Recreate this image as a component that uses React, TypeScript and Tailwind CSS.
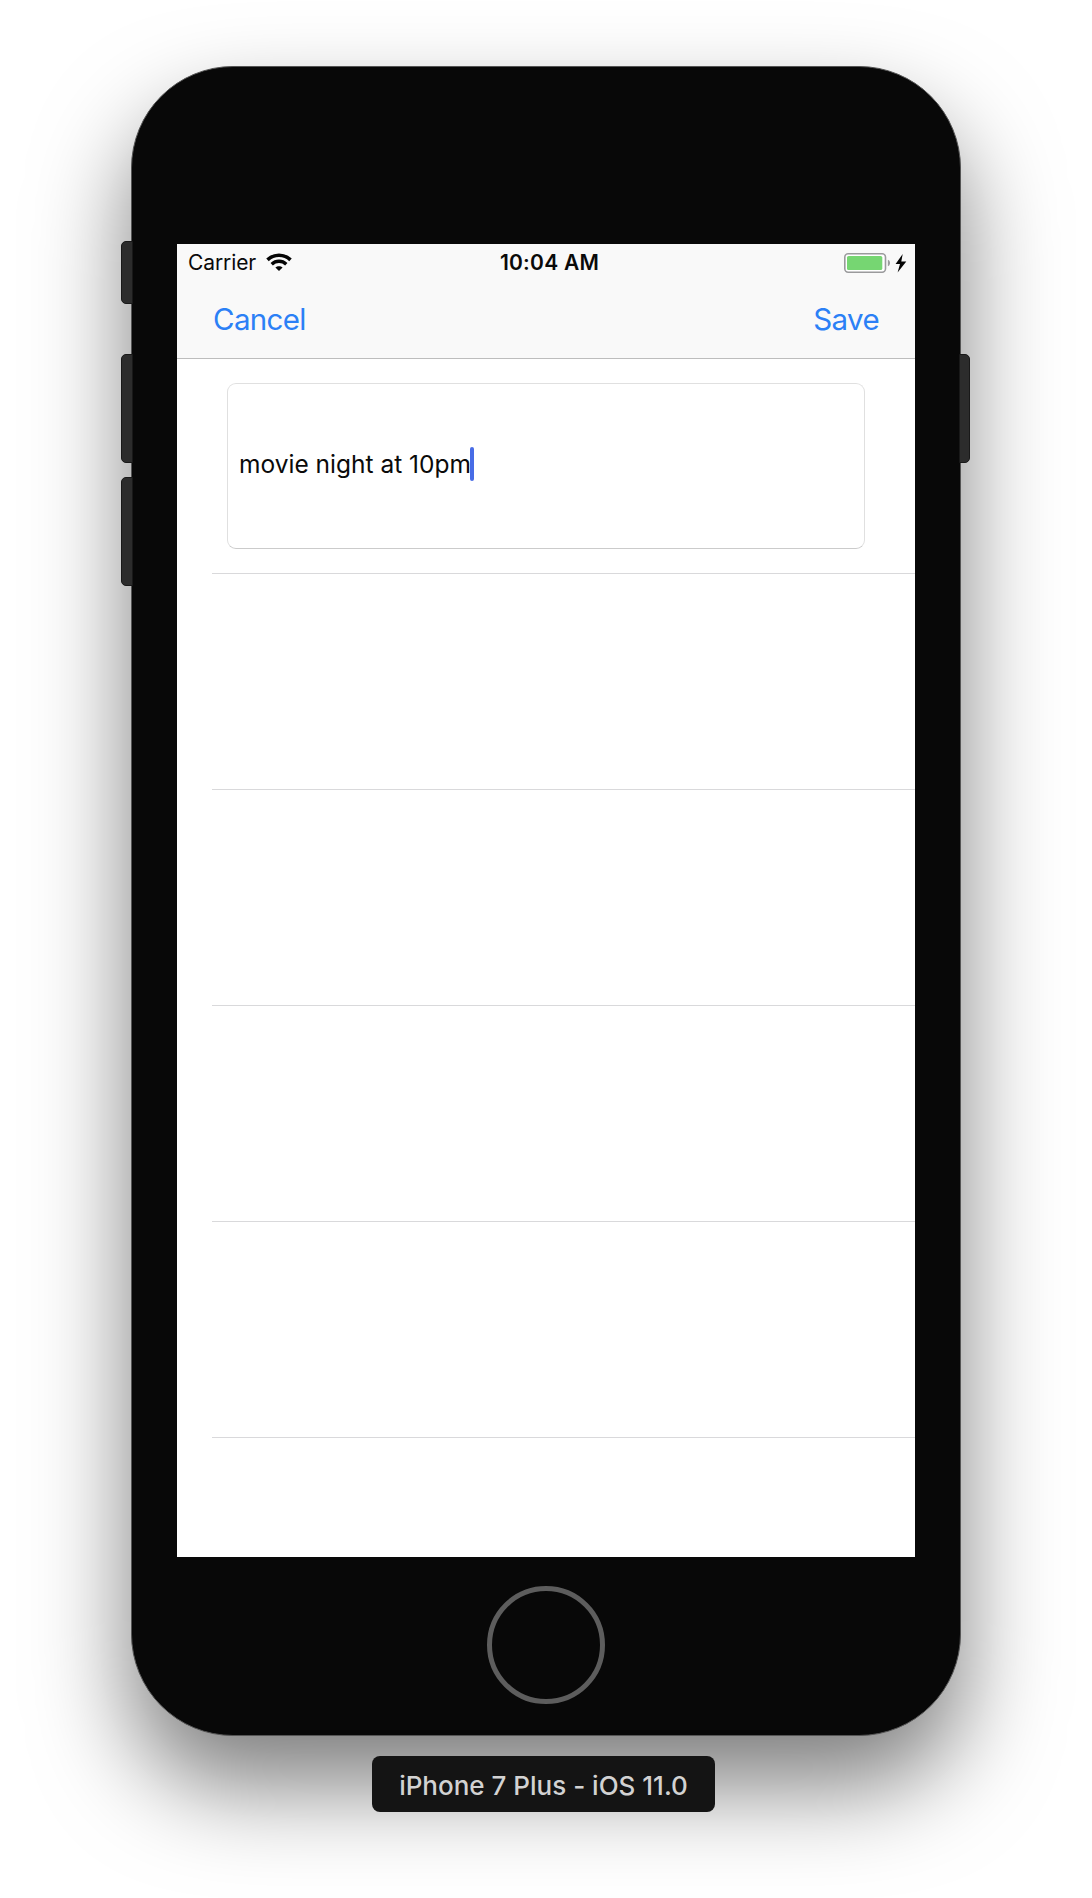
function WifiIcon() {
  return (
    <svg width="26" height="19" viewBox="0 0 26 19" fill="none">
      <path d="M1.5 6.9C8 .6 18 .6 24.5 6.9" stroke="#050505" strokeWidth="3.6" />
      <path d="M5.7 11.2C9.9 7.3 16.1 7.3 20.3 11.2" stroke="#050505" strokeWidth="3.4" />
      <path d="M9.4 14.5C11.3 12.7 14.7 12.7 16.6 14.5L13 18Z" fill="#050505" />
    </svg>
  );
}

function BatteryIcon() {
  return (
    <svg width="63" height="20" viewBox="0 0 63 20">
      <rect x=".8" y=".8" width="40.7" height="18.4" rx="3.4" fill="#fff" stroke="#9a9a9c" strokeWidth="1.6" />
      <rect x="3" y="3" width="35.3" height="14" rx="1.6" fill="#76d672" />
      <path d="M43.9 6.8C46.7 7.6 46.7 12.4 43.9 13.2Z" fill="#9a9a9c" />
      <path d="M58.7 1L51.6 11.1H56L53.6 19.4L62.3 8.4H57.3Z" fill="#050505" />
    </svg>
  );
}

export default function App() {
  return (
    <main className="flex h-[1898px] w-[1092px] flex-col items-center overflow-hidden bg-white pt-[66px] font-['Inter',sans-serif]">
      <div className="relative h-[1670px] w-[830px] shrink-0">
        <div className="absolute top-[175px] -left-[10px] h-[63px] w-3 rounded-l-[5px] border border-[#191919] bg-[#2c2c2c]" />
        <div className="absolute top-[288px] -left-[10px] h-[109px] w-3 rounded-l-[5px] border border-[#191919] bg-[#2c2c2c]" />
        <div className="absolute top-[411px] -left-[10px] h-[109px] w-3 rounded-l-[5px] border border-[#191919] bg-[#2c2c2c]" />
        <section className="flex h-full w-full flex-col items-center rounded-[102px] border border-[#555] bg-[#080808] pt-[177px] shadow-[0_50px_96px_rgba(0,0,0,0.51)]">
          <div className="flex h-[1313px] w-[738px] flex-col overflow-hidden bg-white">
            <header className="h-[115px] shrink-0 border-b border-[#bdbdbd] bg-[#f9f9f9]">
              <div className="grid h-9 grid-cols-3 items-center pr-2 pl-[11px] text-[21px] leading-9 text-[#0a0a0a]">
                <div className="flex items-center gap-[10px]">
                  <span className="pt-px tracking-[-0.1px]">Carrier</span>
                  <WifiIcon />
                </div>
                <span className="pt-px pl-1 text-center font-semibold tracking-[0.25px]">10:04 AM</span>
                <div className="flex justify-end">
                  <BatteryIcon />
                </div>
              </div>
              <div className="flex h-[78px] items-center justify-between px-9 text-[29.5px] tracking-[-0.65px] text-[#2b80f6]">
                <button>Cancel</button>
                <button>Save</button>
              </div>
            </header>
            <div className="ml-[35px] h-[215px] shrink-0 border-b border-[#d9d9db] pt-6 pl-[15px]">
              <div className="flex h-[166px] w-[638px] items-center rounded-[9px] border border-[#e0e0e0] border-b-[#cbcbcb] pb-1 pl-[11px] text-[24.5px] text-[#0a0a0a]">
                <span>movie night at 10pm</span>
                <span className="-ml-px h-[34px] w-1 rounded-sm bg-[#486ce6]" />
              </div>
            </div>
            <div className="ml-[35px] h-[216px] shrink-0 border-b border-[#d9d9db]" />
            <div className="ml-[35px] h-[216px] shrink-0 border-b border-[#d9d9db]" />
            <div className="ml-[35px] h-[216px] shrink-0 border-b border-[#d9d9db]" />
            <div className="ml-[35px] h-[216px] shrink-0 border-b border-[#d9d9db]" />
          </div>
          <button aria-label="Home" className="mt-[29px] mr-[1px] size-[118px] rounded-full border-[5px] border-[#5d5d5d]" />
        </section>
        <div className="absolute top-[288px] -right-[9px] h-[109px] w-[11px] rounded-r-[5px] border border-[#191919] bg-[#2c2c2c]" />
      </div>
      <div className="relative mt-5 mr-[5px] flex h-14 w-[343px] items-center justify-center rounded-lg bg-[#141414] pt-0.5 text-[26px] font-medium text-[#d2d2d2]">
        iPhone 7 Plus - iOS 11.0
      </div>
    </main>
  );
}
